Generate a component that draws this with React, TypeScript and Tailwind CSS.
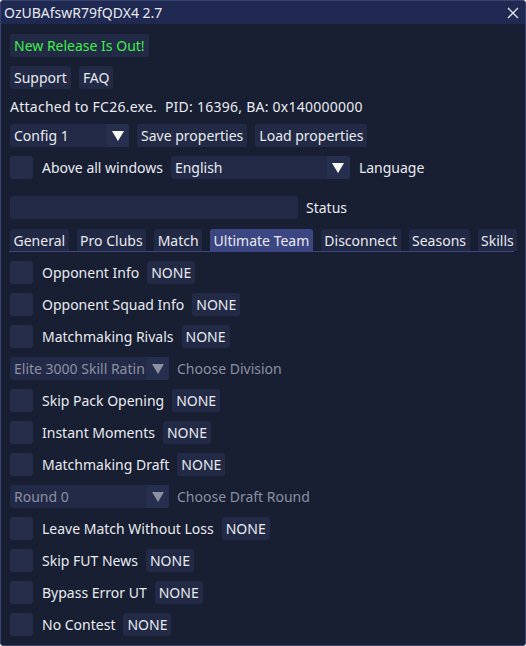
import React from 'react';

const font = { fontFamily: '"Noto Sans", "Open Sans", sans-serif' };

function Btn({ children, className = '' }: { children: React.ReactNode; className?: string }) {
    return (
        <div className={`h-[23px] px-[4px] rounded-[3px] bg-[#222a46] flex items-center whitespace-nowrap ${className}`}>
            {children}
        </div>
    );
}

function Arrow({ color = '#ffffff' }: { color?: string }) {
    return (
        <svg width="12" height="10" viewBox="0 0 12 10">
            <polygon points="0,0 12,0 6,10" fill={color} />
        </svg>
    );
}

function Combo({ value, width, disabled = false }: { value: string; width: string; disabled?: boolean }) {
    return (
        <div className={`h-[23px] ${width} rounded-[3px] bg-[#232a47] flex overflow-hidden`}>
            <div className={`flex-1 px-[4px] flex items-center whitespace-nowrap overflow-hidden ${disabled ? 'text-[#8b90a2]' : ''}`}>
                {value}
            </div>
            <div className="w-[23px] bg-[#272f4e] flex items-center justify-center">
                <Arrow color={disabled ? '#8b90a2' : '#ffffff'} />
            </div>
        </div>
    );
}

function Check() {
    return <div className="w-[23px] h-[23px] rounded-[3px] bg-[#262d4b] shrink-0" />;
}

function Toggle({ label }: { label: string }) {
    return (
        <div className="flex items-center h-[23px]">
            <Check />
            <span className="ml-[9px] mr-[8px]">{label}</span>
            <Btn>NONE</Btn>
        </div>
    );
}

const tabs = ['General', 'Pro Clubs', 'Match', 'Ultimate Team', 'Disconnect', 'Seasons', 'Skills'];

export default function App() {
    return (
        <div style={font} className="w-[526px] h-[646px] bg-[#181f33] text-[#e8eaf0] text-[14px] leading-[17px] border border-[#3a4272] rounded-[3px] overflow-hidden flex flex-col">
            <div className="h-[23px] bg-[#1f2952] flex items-center justify-between pl-[3px] pr-[6px] shrink-0">
                <span>OzUBAfswR79fQDX4 2.7</span>
                <svg width="12" height="12" viewBox="0 0 12 12" className="mt-[1px]">
                    <path d="M1 1 L11 11 M11 1 L1 11" stroke="#e6e8ee" strokeWidth="1.3" />
                </svg>
            </div>

            <div className="flex flex-col gap-[9px] pl-[9px] pr-[12px] pt-[10px]">
                <div className="flex">
                    <Btn className="text-[#3ef04a]">New Release Is Out!</Btn>
                </div>
                <div className="flex gap-[8px]">
                    <Btn>Support</Btn>
                    <Btn>FAQ</Btn>
                </div>
                <div className="h-[17px] flex items-center whitespace-pre tracking-[0.25px]">Attached to FC26.exe.  PID: 16396, BA: 0x140000000</div>
                <div className="flex gap-[8px]">
                    <Combo value="Config 1" width="w-[119px]" />
                    <Btn>Save properties</Btn>
                    <Btn>Load properties</Btn>
                </div>
                <div className="flex items-center gap-[8px]">
                    <Check />
                    <span className="ml-[1px]">Above all windows</span>
                    <Combo value="English" width="w-[179px]" />
                    <span className="ml-[1px]">Language</span>
                </div>
                <div className="flex items-center gap-[8px] mt-[8px]">
                    <div className="w-[288px] h-[23px] rounded-[3px] bg-[#232a47]" />
                    <span>Status</span>
                </div>

                <div className="flex flex-col mt-[1px]">
                    <div className="flex gap-[8px]">
                        {tabs.map((t) => (
                            <div
                                key={t}
                                className={`h-[22px] px-[3.5px] rounded-t-[3px] flex items-center whitespace-nowrap ${t === 'Ultimate Team' ? 'bg-[#3c4682]' : 'bg-[#212944]'}`}
                            >
                                {t}
                            </div>
                        ))}
                    </div>
                    <div className="h-[1px] bg-[#3c4682] -mx-[1px]" />
                </div>

                <Toggle label="Opponent Info" />
                <Toggle label="Opponent Squad Info" />
                <Toggle label="Matchmaking Rivals" />
                <div className="flex items-center gap-[8px]">
                    <Combo value="Elite 3000 Skill Ratin" width="w-[159px]" disabled />
                    <span className="text-[#8b90a2]">Choose Division</span>
                </div>
                <Toggle label="Skip Pack Opening" />
                <Toggle label="Instant Moments" />
                <Toggle label="Matchmaking Draft" />
                <div className="flex items-center gap-[8px]">
                    <Combo value="Round 0" width="w-[159px]" disabled />
                    <span className="text-[#8b90a2]">Choose Draft Round</span>
                </div>
                <Toggle label="Leave Match Without Loss" />
                <Toggle label="Skip FUT News" />
                <Toggle label="Bypass Error UT" />
                <Toggle label="No Contest" />
            </div>
        </div>
    );
}
